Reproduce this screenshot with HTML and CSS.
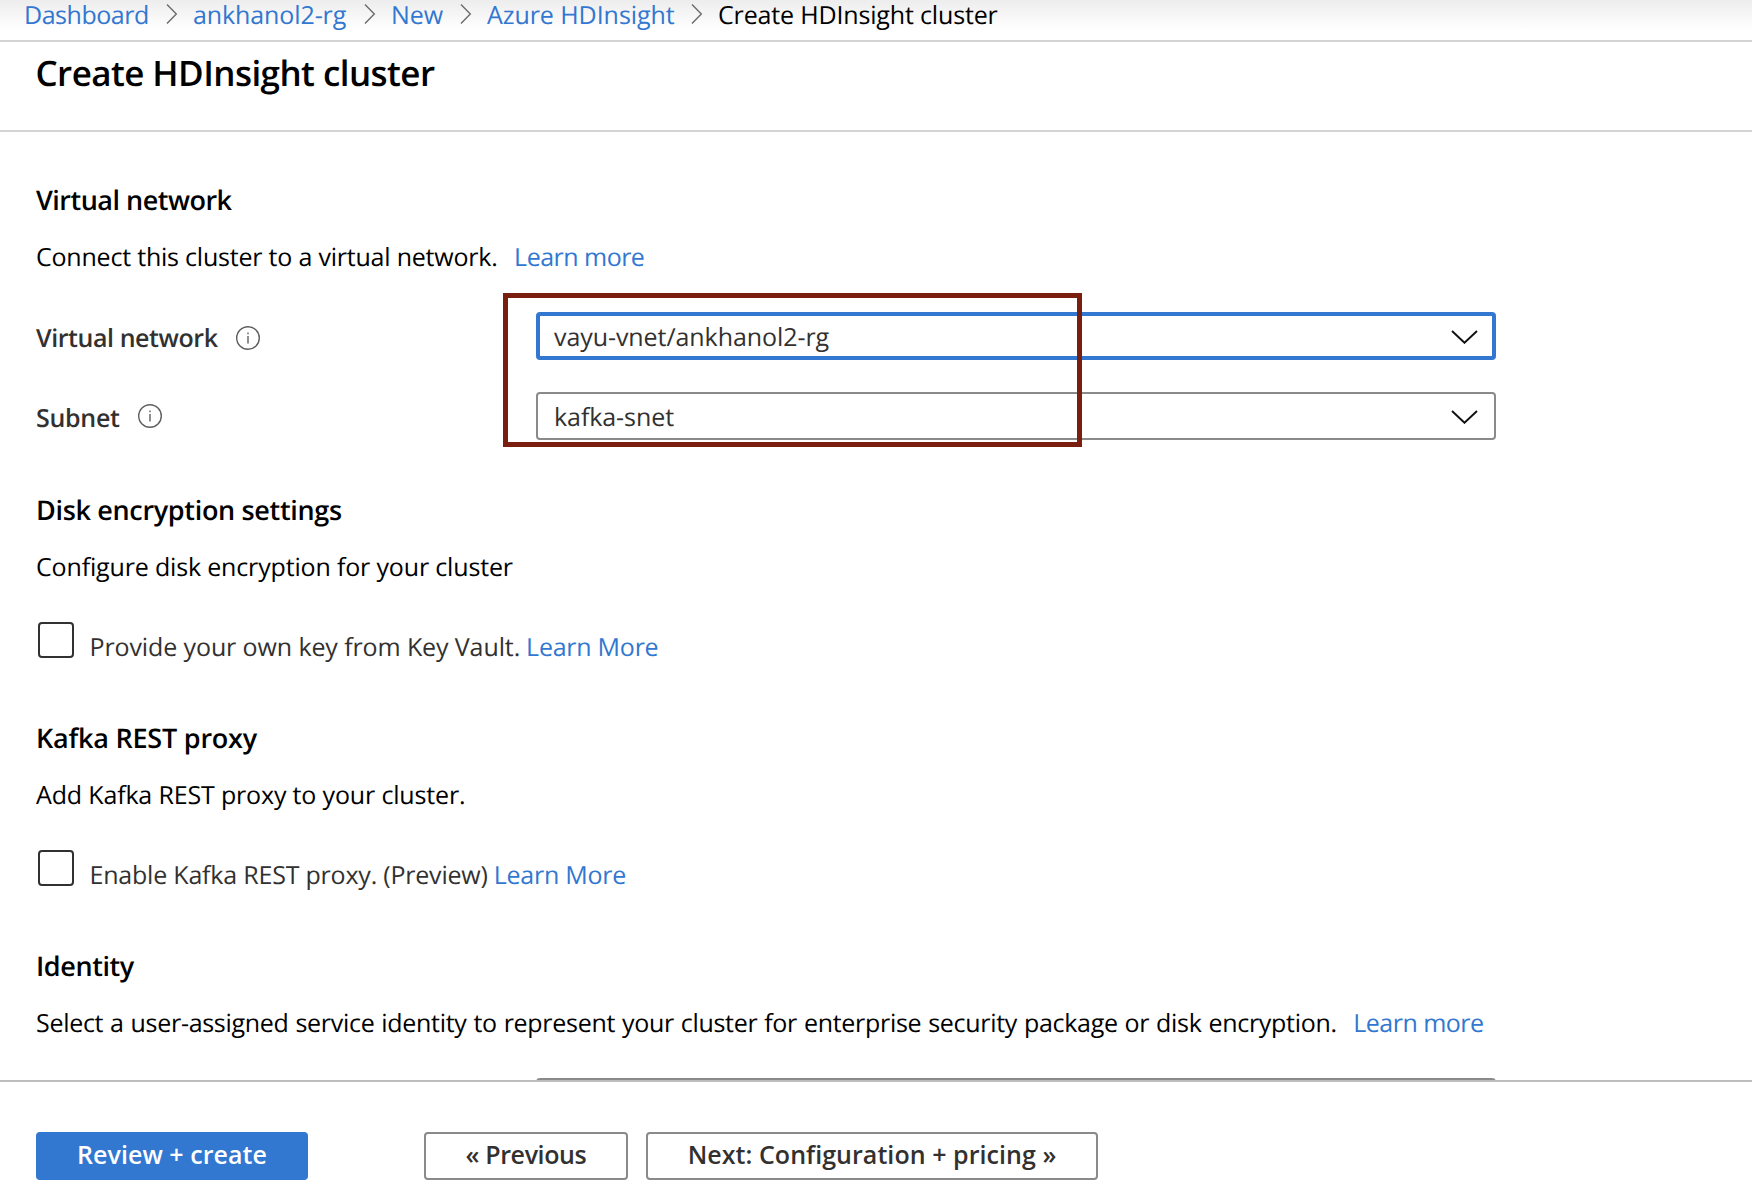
FILE: index.html
```
<!DOCTYPE html>
<html lang="en">
<head>
<meta charset="utf-8">
<title>Create HDInsight cluster</title>
<link rel="stylesheet" href="styles.css">
</head>
<body>
<svg class="defs" width="0" height="0">
  <symbol id="sep" viewBox="0 0 12 20"><path d="M1 .5 10.3 10 1 19.5"/></symbol>
  <symbol id="down" viewBox="0 0 27 14"><path d="M1 1 13.5 12.8 26 1"/></symbol>
  <symbol id="info" viewBox="0 0 24 24"><circle cx="12" cy="12" r="11.3"/><path d="M12 10v7.5M12 6.4v1.8"/></symbol>
</svg>
<div class="page">
  <nav class="breadcrumb">
    <div class="crumb"><a class="crumb-dashboard">Dashboard</a><svg class="sep"><use href="#sep"/></svg></div>
    <div class="crumb"><a class="crumb-group">ankhanol2-rg</a><svg class="sep"><use href="#sep"/></svg></div>
    <div class="crumb"><a class="crumb-new">New</a><svg class="sep"><use href="#sep"/></svg></div>
    <div class="crumb"><a class="crumb-service">Azure HDInsight</a><svg class="sep"><use href="#sep"/></svg></div>
    <div class="crumb"><span>Create HDInsight cluster</span></div>
  </nav>
  <header class="title"><h1>Create HDInsight cluster</h1></header>
  <main class="content">
    <section>
      <h2 class="h-network">Virtual network</h2>
      <p><span class="p-network">Connect this cluster to a virtual network.</span><a class="more">Learn more</a></p>
      <div class="fields">
        <div class="field">
          <label class="l-network">Virtual network</label><svg class="info info-network"><use href="#info"/></svg>
          <div class="select focused"><span>vayu-vnet/ankhanol2-rg</span><svg class="down"><use href="#down"/></svg></div>
        </div>
        <div class="field">
          <label class="l-subnet">Subnet</label><svg class="info info-subnet"><use href="#info"/></svg>
          <div class="select"><span>kafka-snet</span><svg class="down"><use href="#down"/></svg></div>
        </div>
        <div class="highlight"></div>
      </div>
    </section>
    <section>
      <h2 class="h-disk">Disk encryption settings</h2>
      <p><span>Configure disk encryption for your cluster</span></p>
      <div class="check"><i class="box"></i><span class="c-key">Provide your own key from Key Vault.</span><a>Learn More</a></div>
    </section>
    <section>
      <h2 class="h-kafka">Kafka REST proxy</h2>
      <p><span>Add Kafka REST proxy to your cluster.</span></p>
      <div class="check"><i class="box"></i><span class="c-proxy">Enable Kafka REST proxy. (Preview)</span><a>Learn More</a></div>
    </section>
    <section>
      <h2 class="h-identity">Identity</h2>
      <p><span class="p-identity">Select a user-assigned service identity to represent your cluster for enterprise security package or disk encryption.</span><a class="more">Learn more</a></p>
      <div class="fields"><div class="field"><div class="select"></div></div></div>
    </section>
  </main>
  <footer class="actions">
    <button class="btn primary">Review + create</button>
    <button class="btn previous">« Previous</button>
    <button class="btn next">Next: Configuration + pricing »</button>
  </footer>
</div>
</body>
</html>
```
FILE: styles.css
```
* { box-sizing: border-box; }
body {
  margin: 0;
  background: #fff;
  color: #000;
  font: 25px/40px "Open Sans", "Noto Sans", sans-serif;
  letter-spacing: -.16px;
  text-rendering: geometricPrecision;
}
.defs { position: absolute; }
.page { display: flex; flex-direction: column; height: 1200px; overflow: hidden; }
a { color: #3277d0; text-decoration: none; white-space: nowrap; }
span, label { white-space: nowrap; }
svg { fill: none; flex: none; }

.breadcrumb {
  flex: none;
  display: grid;
  grid-template-columns: 169px 198px 96px 231px 1fr;
  height: 42px;
  padding-left: 24px;
  line-height: 30px;
  border-bottom: 2px solid #d4d4d4;
  background: linear-gradient(#ededed, #fff 30px);
}
.crumb { display: flex; justify-content: space-between; height: 30px; padding-right: 15px; }
.crumb-dashboard { letter-spacing: -.465px; }
.crumb-group { letter-spacing: -.1px; }
.crumb-new { letter-spacing: -.1px; }
.crumb-service { letter-spacing: -.06px; }
.sep { width: 12px; height: 20px; margin-top: 4px; stroke: #6b6b6b; stroke-width: 1.4; }

.title { flex: none; height: 90px; padding-left: 35.5px; border-bottom: 2px solid #d4d4d4; }
h1 { margin: 0; font-size: 35px; line-height: 63px; font-weight: 600; letter-spacing: -.57px; }

.content { flex: 1; min-height: 0; overflow: hidden; padding: 48px 36px 0; }
section { margin-bottom: 60px; }
section:first-child { margin-bottom: 50px; }
h2 { margin: 0 0 17px; font-size: 27px; line-height: 40px; font-weight: 600; letter-spacing: -.33px; }
.h-network { letter-spacing: -.5px; }
.h-kafka { letter-spacing: -.22px; }
.h-identity { letter-spacing: -.4px; }
p { display: flex; margin: 0 0 35px; }
.p-network { letter-spacing: -.21px; }
.p-identity { letter-spacing: -.29px; word-spacing: .65px; }
.more { margin-left: 16.5px; letter-spacing: -.52px; }

.fields { position: relative; display: flex; flex-direction: column; gap: 32px; }
.field { display: flex; height: 48px; line-height: 48px; color: #323130; }
label { padding-top: 2px; font-weight: 600; }
.l-network { letter-spacing: -.43px; }
.l-subnet { letter-spacing: -.295px; }
.info { width: 24px; height: 24px; stroke: #605e5c; stroke-width: 1.4; }
.info-network { margin: 14px 0 0 18px; }
.info-subnet { margin: 12px 0 0 18px; }
.select {
  display: flex;
  justify-content: space-between;
  align-items: center;
  width: 960px;
  margin: 0 220px 0 auto;
  padding: 2px 16px 0;
  border: 2px solid #8a8a8a;
  border-radius: 4px;
  line-height: 42px;
  letter-spacing: -.07px;
}
.focused { padding: 2px 14px 0; border: 4px solid #3277d0; line-height: 38px; }
.down { width: 27px; height: 14px; margin: -1px 0 0; stroke: #111; stroke-width: 1.9; }
.highlight {
  position: absolute;
  left: 467px;
  top: -19px;
  width: 579px;
  height: 154px;
  border: 5px solid #7a1f10;
}

.check { display: flex; height: 36px; padding-left: 2px; color: #323130; }
.check span, .check a { margin-top: 5px; }
.check a { margin-left: 6px; letter-spacing: -.25px; }
.box { flex: none; width: 36px; height: 36px; margin-right: 15.5px; border: 2px solid #323130; border-radius: 4px; }
.c-key { letter-spacing: -.11px; }
.c-proxy { letter-spacing: -.205px; }

.actions { flex: none; display: flex; height: 120px; padding: 50px 36px 0; border-top: 2px solid #bdbdbd; }
.btn {
  height: 48px;
  padding: 0 0 5px;
  border: 2px solid #8a8a8a;
  border-radius: 4px;
  background: #fff;
  color: #323130;
  font: 600 25px/38px "Open Sans", "Noto Sans", sans-serif;
  letter-spacing: .05px;
}
.primary { width: 272px; border-color: #3277d0; background: #3277d0; color: #fff; }
.previous { width: 204px; margin-left: 116px; letter-spacing: -.379px; }
.next { width: 452px; margin-left: 18px; }
```
